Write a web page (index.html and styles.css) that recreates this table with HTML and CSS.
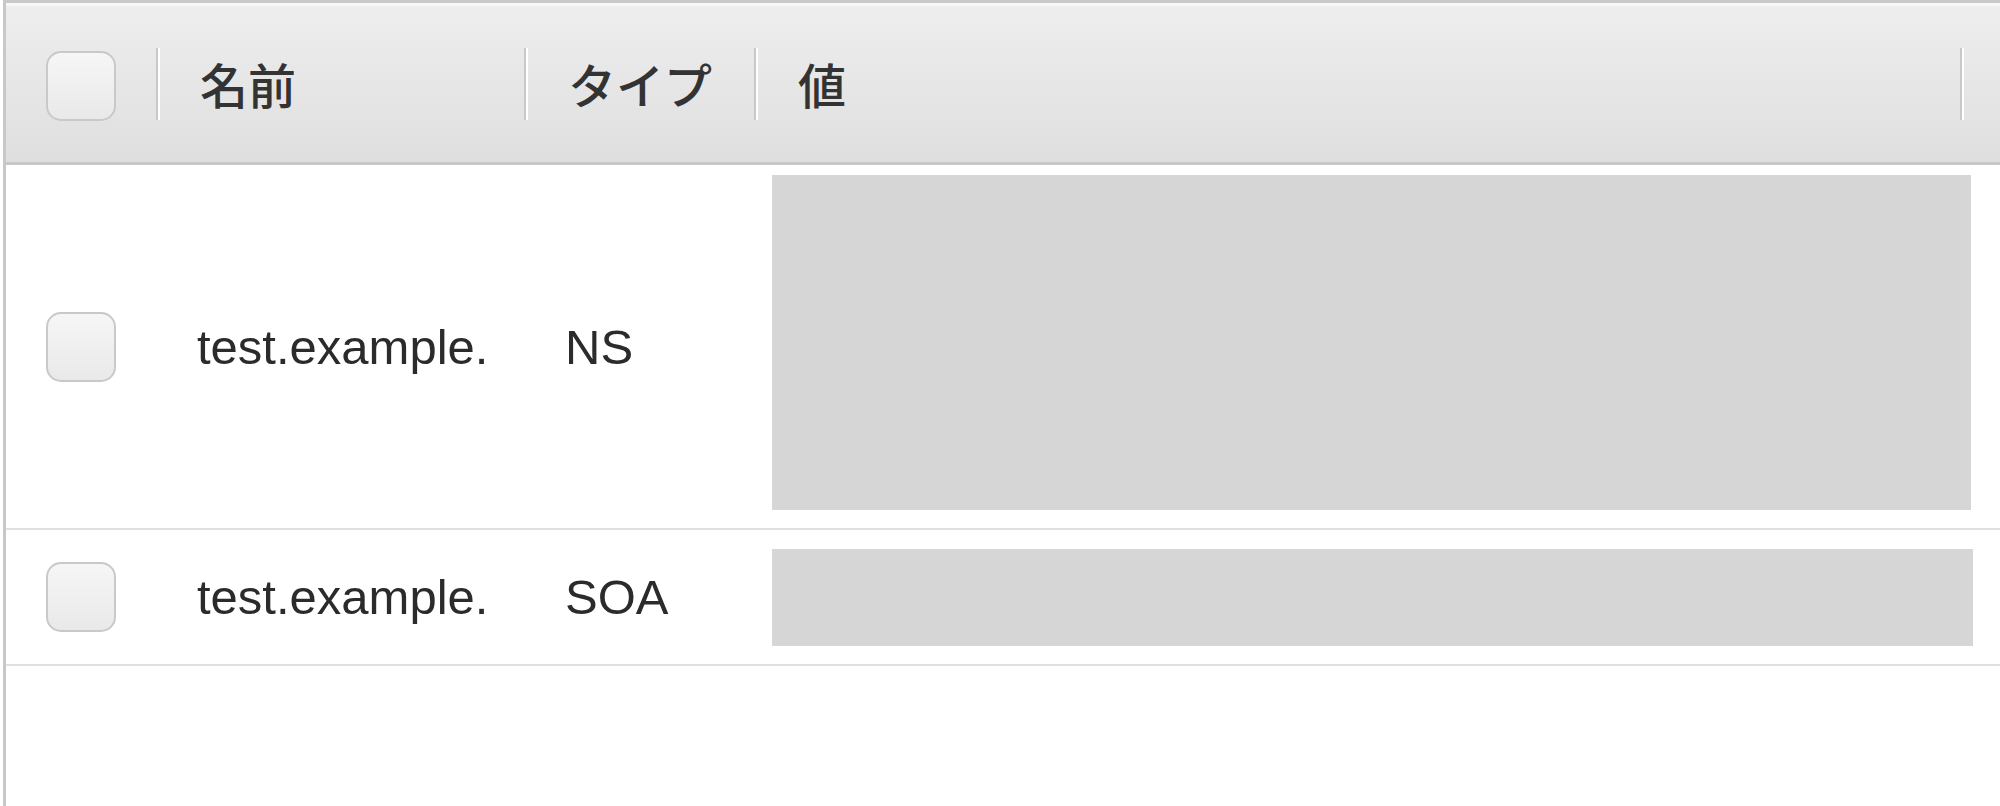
FILE: index.html
```html
<!DOCTYPE html>
<html lang="ja">
<head>
<meta charset="utf-8">
<title>Records</title>
<link rel="stylesheet" href="styles.css">
</head>
<body>
<div class="table">
  <div class="head">
    <div class="cell check"><span class="checkbox"></span></div>
    <div class="th"><span class="label">名前</span></div>
    <div class="th"><span class="label">タイプ</span></div>
    <div class="th"><span class="label">値</span></div>
    <div class="th"></div>
  </div>
  <div class="row row-tall">
    <div class="cell check"><span class="checkbox"></span></div>
    <div class="td">test.example.</div>
    <div class="td">NS</div>
    <div class="value"><div class="redact redact-tall"></div></div>
  </div>
  <div class="row row-short">
    <div class="cell check"><span class="checkbox"></span></div>
    <div class="td">test.example.</div>
    <div class="td">SOA</div>
    <div class="value"><div class="redact redact-short"></div></div>
  </div>
</div>
</body>
</html>
```
FILE: styles.css
```css
html, body {
  margin: 0;
  padding: 0;
  background: #ffffff;
  overflow: hidden;
}

.table {
  box-sizing: border-box;
  margin-left: 3px;
  width: 1997px;
  height: 806px;
  border-left: 3px solid #c8c8c8;
  border-top: 3px solid #c9c9c9;
  font-family: "Liberation Sans", Arial, "Noto Sans CJK JP", sans-serif;
  color: #2b2b2b;
}

.head,
.row {
  display: grid;
  grid-template-columns: 150px 368px 230px 1206px 1fr;
  box-sizing: border-box;
}

.head {
  height: 162px;
  border-bottom: 3px solid #c8c8c8;
  background: linear-gradient(#eeeeee, #dfdfdf);
  box-shadow: inset 0 3px 0 #f8f8f8;
}

.row-tall {
  height: 365px;
  border-bottom: 2px solid #e0e0e0;
}

.row-short {
  height: 136px;
  border-bottom: 2px solid #e0e0e0;
}

.check {
  display: flex;
  align-items: center;
  padding-left: 40px;
}

.head .check {
  padding-top: 6px;
}

.checkbox {
  display: block;
  box-sizing: border-box;
  width: 70px;
  height: 70px;
  border: 2px solid #c9c9c9;
  border-radius: 15px;
  background: linear-gradient(#f6f6f6, #e9e9e9);
}

.th {
  display: flex;
  align-items: center;
  font-family: "Noto Sans CJK JP", "Liberation Sans", sans-serif;
  font-size: 48px;
  font-weight: 500;
  color: #333333;
}

.th::before {
  content: "";
  display: block;
  flex: none;
  width: 2px;
  height: 72px;
  margin-top: 3px;
  margin-right: 40px;
  background: #c8c8c8;
  border-right: 2px solid #ffffff;
}

.label {
  line-height: 1;
}

.td {
  display: flex;
  align-items: center;
  padding-left: 41px;
  font-size: 49px;
  white-space: nowrap;
}

.value {
  grid-column: 4 / -1;
  padding-left: 18px;
}

.redact {
  background: #d6d6d6;
}

.redact-tall {
  width: 1199px;
  height: 335px;
  margin-top: 10px;
}

.redact-short {
  width: 1201px;
  height: 97px;
  margin-top: 19px;
}
```
